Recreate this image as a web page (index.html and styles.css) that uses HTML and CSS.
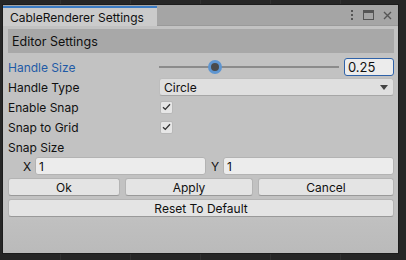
FILE: index.html
```html
<!DOCTYPE html>
<html lang="en">
<head>
    <meta charset="UTF-8">
    <title>CableRenderer Settings</title>
    <link rel="stylesheet" href="styles.css">
</head>
<body>
    <div class="window">
        <div class="title-bar">
            <div class="tab">CableRenderer Settings</div>
            <div class="title-icons">
                <svg width="4" height="10" viewBox="0 0 4 10">
                    <rect x="1" y="0" width="2" height="2" fill="#555"/>
                    <rect x="1" y="4" width="2" height="2" fill="#555"/>
                    <rect x="1" y="8" width="2" height="2" fill="#555"/>
                </svg>
                <svg width="11" height="10" viewBox="0 0 11 10">
                    <rect x="0.5" y="0.5" width="10" height="9" fill="none" stroke="#555"/>
                    <rect x="0" y="0" width="11" height="3" fill="#555"/>
                </svg>
                <svg width="9" height="9" viewBox="0 0 9 9">
                    <path d="M1 1L8 8M8 1L1 8" stroke="#555" stroke-width="1.4"/>
                </svg>
            </div>
        </div>

        <div class="content">
            <div class="section-header">Editor Settings</div>

            <div class="fields">
                <div class="row">
                    <span class="label active">Handle Size</span>
                    <div class="slider-wrap">
                        <div class="slider">
                            <div class="track"></div>
                            <div class="thumb"></div>
                        </div>
                        <div class="input focused">0.25</div>
                    </div>
                </div>

                <div class="row">
                    <span class="label">Handle Type</span>
                    <div class="dropdown">
                        <span>Circle</span>
                        <span class="arrow"></span>
                    </div>
                </div>

                <div class="row">
                    <span class="label">Enable Snap</span>
                    <div class="checkbox">
                        <svg width="9" height="8" viewBox="0 0 9 8">
                            <path d="M1 4.2L3.3 6.4L8 1.2" fill="none" stroke="#333" stroke-width="1.3"/>
                        </svg>
                    </div>
                </div>

                <div class="row">
                    <span class="label">Snap to Grid</span>
                    <div class="checkbox">
                        <svg width="9" height="8" viewBox="0 0 9 8">
                            <path d="M1 4.2L3.3 6.4L8 1.2" fill="none" stroke="#333" stroke-width="1.3"/>
                        </svg>
                    </div>
                </div>

                <div class="row">
                    <span class="label">Snap Size</span>
                </div>

                <div class="vector-row">
                    <span class="axis">X</span>
                    <div class="input">1</div>
                    <span class="axis">Y</span>
                    <div class="input">1</div>
                </div>

                <div class="button-row">
                    <button class="btn">Ok</button>
                    <button class="btn">Apply</button>
                    <button class="btn">Cancel</button>
                </div>

                <button class="btn reset">Reset To Default</button>
            </div>
        </div>
    </div>
</body>
</html>
```

FILE: styles.css
```css
* {
    margin: 0;
    padding: 0;
    box-sizing: border-box;
}

body {
    width: 406px;
    height: 260px;
    overflow: hidden;
    font-family: 'Inter', 'Noto Sans', sans-serif;
    font-size: 12px;
    color: #101010;
    background-color: #262626;
    background-image: repeating-linear-gradient(90deg, transparent 0, transparent 60px, #313131 60px, #313131 61px, transparent 61px, transparent 70px);
    background-position: 0 0;
    padding: 5px 0 0 3px;
}

.window {
    width: 395px;
    height: 248px;
    display: flex;
    flex-direction: column;
    background: linear-gradient(to bottom, #c2c2c2 0%, #c2c2c2 82%, #bababa 100%);
    box-shadow: 0 0 0 1px #1c1c1c;
}

/* Title bar with tab */
.title-bar {
    height: 21px;
    display: flex;
    align-items: flex-end;
    justify-content: space-between;
    background: #a5a5a5;
    border-bottom: 1px solid #9a9a9a;
}

.tab {
    width: 154px;
    height: 20px;
    padding-left: 7px;
    display: flex;
    align-items: center;
    background: #cbcbcb;
    border-top: 2px solid #3a7bc4;
    margin-bottom: -1px;
}

.title-icons {
    display: flex;
    align-items: center;
    gap: 9px;
    height: 20px;
    padding-right: 6px;
}

.content {
    flex: 1;
    padding: 3px 4px 0 5px;
}

.section-header {
    height: 24px;
    display: flex;
    align-items: center;
    padding-left: 4px;
    background: #a8a8a8;
    font-size: 12.5px;
}

.fields {
    margin-top: 5px;
    display: flex;
    flex-direction: column;
    gap: 2px;
}

.row {
    height: 18px;
    display: flex;
    align-items: center;
}

.label {
    width: 151px;
    flex-shrink: 0;
}

.label.active {
    color: #1f5aa6;
}

/* Slider */
.slider-wrap {
    flex: 1;
    display: flex;
    align-items: center;
    gap: 5px;
}

.slider {
    flex: 1;
    height: 18px;
    position: relative;
    display: flex;
    align-items: center;
}

.track {
    width: 100%;
    height: 2px;
    background: #8b8b8b;
}

.thumb {
    position: absolute;
    left: 49px;
    top: 2px;
    width: 14px;
    height: 14px;
    border-radius: 50%;
    background: #4a4a4a;
    border: 3px solid #5e95d0;
}

.input {
    height: 18px;
    display: flex;
    align-items: center;
    padding-left: 3px;
    background: #ececec;
    border: 1px solid #b3b3b3;
    border-radius: 3px;
}

.slider-wrap .input {
    width: 50px;
    flex-shrink: 0;
}

.input.focused {
    border-color: #2f62a8;
    font-size: 13px;
}

/* Dropdown */
.dropdown {
    flex: 1;
    height: 18px;
    display: flex;
    align-items: center;
    justify-content: space-between;
    padding: 0 5px 0 4px;
    background: #dfdfdf;
    border: 1px solid #bdbdbd;
    border-bottom-color: #a6a6a6;
    border-radius: 3px;
}

.arrow {
    width: 0;
    height: 0;
    border-left: 4px solid transparent;
    border-right: 4px solid transparent;
    border-top: 5px solid #444;
}

/* Checkbox */
.checkbox {
    width: 13px;
    height: 13px;
    display: flex;
    align-items: center;
    justify-content: center;
    background: #e6e6e6;
    border: 1px solid #b8b8b8;
    border-radius: 2px;
    margin-left: 1px;
}

/* Vector field */
.vector-row {
    height: 18px;
    display: flex;
    align-items: center;
    padding-left: 15px;
    margin-top: -1px;
}

.axis {
    width: 12px;
}

.vector-row .input {
    flex: 1;
}

.vector-row .input:nth-child(2) {
    margin-right: 5px;
}

/* Buttons */
.button-row {
    display: grid;
    grid-template-columns: 112px 128px 1fr;
    gap: 5px;
    margin-top: 1px;
}

.btn {
    height: 18px;
    font-family: 'Inter', 'Noto Sans', sans-serif;
    font-size: 12px;
    color: #101010;
    background: #e4e4e4;
    border: 1px solid #b4b4b4;
    border-bottom-color: #999;
    border-radius: 3px;
}

.reset {
    margin-top: 1px;
}
```
